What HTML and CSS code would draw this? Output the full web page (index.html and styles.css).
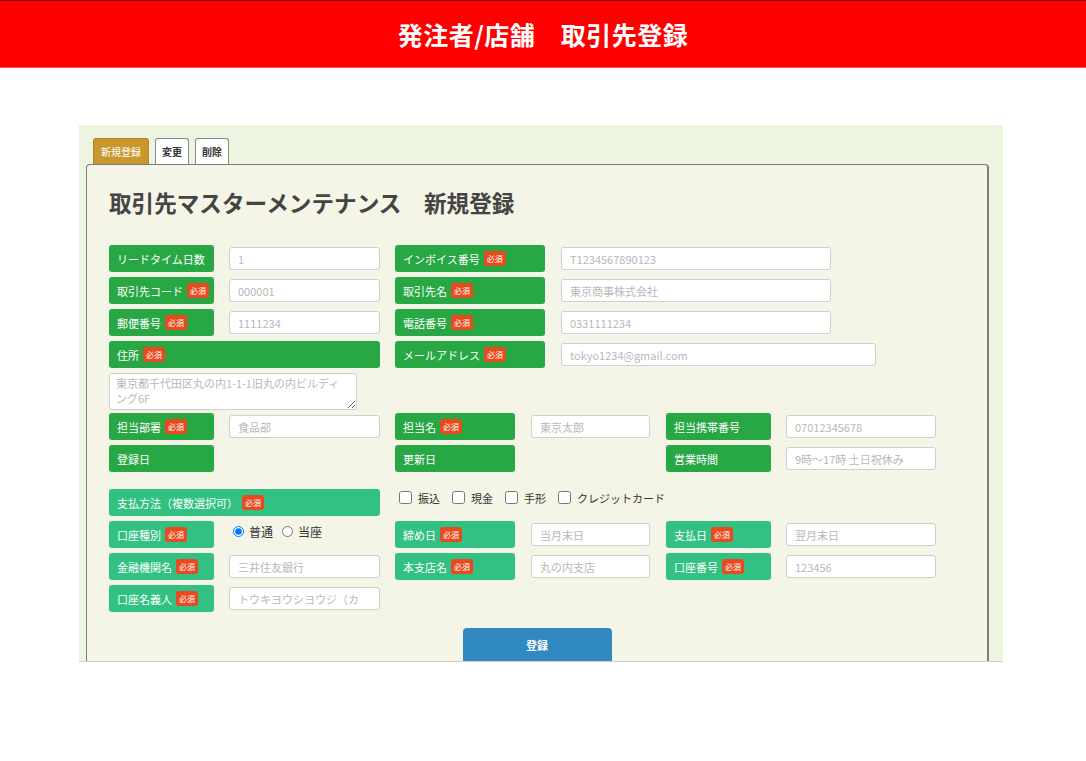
FILE: index.html
```html
<!DOCTYPE html>
<html lang="ja">
<head>
  <meta charset="UTF-8">
  <title>取引先登録</title>
  <link rel="stylesheet" href="styles.css">
</head>
<body>
  <header class="top-bar">
    <h1>発注者/店舗　取引先登録</h1>
  </header>

  <div class="panel">
    <div class="tabs">
      <span class="tab active">新規登録</span>
      <span class="tab">変更</span>
      <span class="tab">削除</span>
    </div>

    <div class="box">
      <h2 class="box-title">取引先マスターメンテナンス　新規登録</h2>

      <form class="form">
        <div class="row">
          <div class="label w105">リードタイム日数</div>
          <input class="field w151" type="text" placeholder="1">
          <div class="label w150">インボイス番号 <span class="req">必須</span></div>
          <input class="field w270" type="text" placeholder="T1234567890123">
        </div>
        <div class="row">
          <div class="label w105">取引先コード <span class="req">必須</span></div>
          <input class="field w151" type="text" placeholder="000001">
          <div class="label w150">取引先名 <span class="req">必須</span></div>
          <input class="field w270" type="text" placeholder="東京商事株式会社">
        </div>
        <div class="row">
          <div class="label w105">郵便番号 <span class="req">必須</span></div>
          <input class="field w151" type="text" placeholder="1111234">
          <div class="label w150">電話番号 <span class="req">必須</span></div>
          <input class="field w270" type="text" placeholder="0331111234">
        </div>
        <div class="row">
          <div class="label w271">住所 <span class="req">必須</span></div>
          <div class="label w150">メールアドレス <span class="req">必須</span></div>
          <input class="field w315" type="text" placeholder="tokyo1234@gmail.com">
        </div>
        <textarea class="address" placeholder="東京都千代田区丸の内1-1-1旧丸の内ビルディング6F"></textarea>

        <div class="row">
          <div class="label w105">担当部署 <span class="req">必須</span></div>
          <input class="field w151" type="text" placeholder="食品部">
          <div class="label w120">担当名 <span class="req">必須</span></div>
          <input class="field w119" type="text" placeholder="東京太郎">
          <div class="label w105">担当携帯番号</div>
          <input class="field w150" type="text" placeholder="07012345678">
        </div>
        <div class="row">
          <div class="label w105">登録日</div>
          <div class="spacer w151"></div>
          <div class="label w120">更新日</div>
          <div class="spacer w119"></div>
          <div class="label w105">営業時間</div>
          <input class="field w150" type="text" placeholder="9時～17時 土日祝休み">
        </div>

        <div class="row pay-row">
          <div class="label teal w271">支払方法（複数選択可） <span class="req">必須</span></div>
          <div class="checks">
            <label><input type="checkbox"> 振込</label>
            <label><input type="checkbox"> 現金</label>
            <label><input type="checkbox"> 手形</label>
            <label><input type="checkbox"> クレジットカード</label>
          </div>
        </div>
        <div class="row">
          <div class="label teal w105">口座種別 <span class="req">必須</span></div>
          <div class="radios w151">
            <label><input type="radio" name="kind" checked> 普通</label>
            <label><input type="radio" name="kind"> 当座</label>
          </div>
          <div class="label teal w120">締め日 <span class="req">必須</span></div>
          <input class="field w119" type="text" placeholder="当月末日">
          <div class="label teal w105">支払日 <span class="req">必須</span></div>
          <input class="field w150" type="text" placeholder="翌月末日">
        </div>
        <div class="row">
          <div class="label teal w105">金融機関名 <span class="req">必須</span></div>
          <input class="field w151" type="text" placeholder="三井住友銀行">
          <div class="label teal w120">本支店名 <span class="req">必須</span></div>
          <input class="field w119" type="text" placeholder="丸の内支店">
          <div class="label teal w105">口座番号 <span class="req">必須</span></div>
          <input class="field w150" type="text" placeholder="123456">
        </div>
        <div class="row">
          <div class="label teal w105">口座名義人 <span class="req">必須</span></div>
          <input class="field w151" type="text" placeholder="トウキヨウシヨウジ（カ">
        </div>

        <div class="actions">
          <button type="submit" class="submit-btn">登録</button>
        </div>
      </form>
    </div>
  </div>
</body>
</html>
```

FILE: styles.css
```css
body {
  margin: 0;
  background: #fff;
  font-family: "Noto Sans CJK JP", "Noto Sans", sans-serif;
  color: #333;
}

.top-bar {
  background: #ff0000;
  border-top: 1px solid #7a0000;
  border-bottom: 1px solid #ff5a5a;
  height: 66px;
  display: flex;
  align-items: center;
  justify-content: center;
}

.top-bar h1 {
  margin: 0;
  color: #fff;
  font-size: 25px;
  font-weight: bold;
  letter-spacing: 0.5px;
}

.panel {
  margin: 57px 0 0 79px;
  width: 924px;
  height: 537px;
  background: #edf5e1;
  overflow: hidden;
  border-bottom: 1px solid #d0d0d0;
  box-sizing: border-box;
  padding-top: 13px;
}

.tabs {
  display: flex;
  gap: 6px;
  margin-left: 14px;
}

.tab {
  height: 26px;
  box-sizing: border-box;
  padding: 0 6px;
  display: flex;
  align-items: center;
  font-size: 10px;
  font-weight: bold;
  color: #333;
  background: #fff;
  border: 1px solid #8a8a8a;
  border-bottom: none;
  border-radius: 3px 3px 0 0;
}

.tab.active {
  background: #c8982f;
  border-color: #b08428;
  color: #fff;
  font-weight: normal;
  padding: 0 7px;
}

.box {
  margin-left: 7px;
  width: 903px;
  height: 600px;
  box-sizing: border-box;
  background: #f4f4e7;
  border: 1px solid #7d7d7d;
  border-right-width: 2px;
  border-radius: 4px 4px 0 0;
  padding: 23px 0 0 22px;
}

.box-title {
  margin: 0 0 27px;
  font-size: 22.6px;
  line-height: 30px;
  font-weight: bold;
  color: #444;
}

.row {
  display: flex;
  align-items: center;
  gap: 15px;
  height: 27px;
  margin-bottom: 5px;
}

.label {
  height: 27px;
  box-sizing: border-box;
  display: flex;
  align-items: center;
  gap: 4px;
  padding-left: 8px;
  background: #28a745;
  color: #fff;
  font-size: 11px;
  border-radius: 3px;
  white-space: nowrap;
}

.label.teal {
  background: #32c183;
}

.req {
  display: inline-block;
  background: #e8491d;
  color: #fff;
  font-size: 8px;
  line-height: 15px;
  height: 15px;
  padding: 0 3px;
  border-radius: 3px;
}

.field {
  height: 23px;
  box-sizing: border-box;
  border: 1px solid #cfcfcf;
  border-radius: 3px;
  background: #fff;
  padding: 0 8px;
  font-family: inherit;
  font-size: 11px;
}

.field::placeholder,
.address::placeholder {
  color: #b8b8b8;
}

.w105 { width: 105px; }
.w119 { width: 119px; }
.w120 { width: 120px; }
.w150 { width: 150px; }
.w151 { width: 151px; }
.w270 { width: 270px; }
.w271 { width: 271px; }
.w315 { width: 315px; }

.row .w120 + .field,
.row .w120 + .spacer,
.row .w150 + .field {
  margin-left: 1px;
}

.row .field + .w105,
.row .spacer + .w105 {
  margin-left: 1px;
}

.address {
  display: block;
  width: 248px;
  height: 37px;
  box-sizing: border-box;
  margin: 0 0 3px;
  padding: 2px 6px;
  border: 1px solid #cfcfcf;
  border-radius: 3px;
  font-family: inherit;
  font-size: 11px;
  line-height: 15px;
  resize: vertical;
}

.pay-row {
  margin-top: 17px;
}

.checks {
  display: flex;
  gap: 8px;
  font-size: 11px;
  color: #333;
  align-self: flex-start;
  margin-top: -1px;
}

.checks label,
.radios label {
  display: flex;
  align-items: center;
  gap: 3px;
}

.checks input {
  width: 13px;
  height: 13px;
  margin: 3px 3px 3px 4px;
}

.radios {
  display: flex;
  gap: 5px;
  align-self: flex-start;
  margin-top: 2px;
  font-size: 12px;
  color: #333;
}

.radios input {
  width: 11px;
  height: 11px;
  margin: 3px 2px 3px 4px;
}

.actions {
  display: flex;
  justify-content: center;
  margin: 16px 0 0 -22px;
}

.submit-btn {
  width: 149px;
  height: 36px;
  border: none;
  border-radius: 4px;
  background: #3189c2;
  color: #fff;
  font-family: inherit;
  font-size: 11px;
  font-weight: bold;
  padding-bottom: 4px;
}
```
